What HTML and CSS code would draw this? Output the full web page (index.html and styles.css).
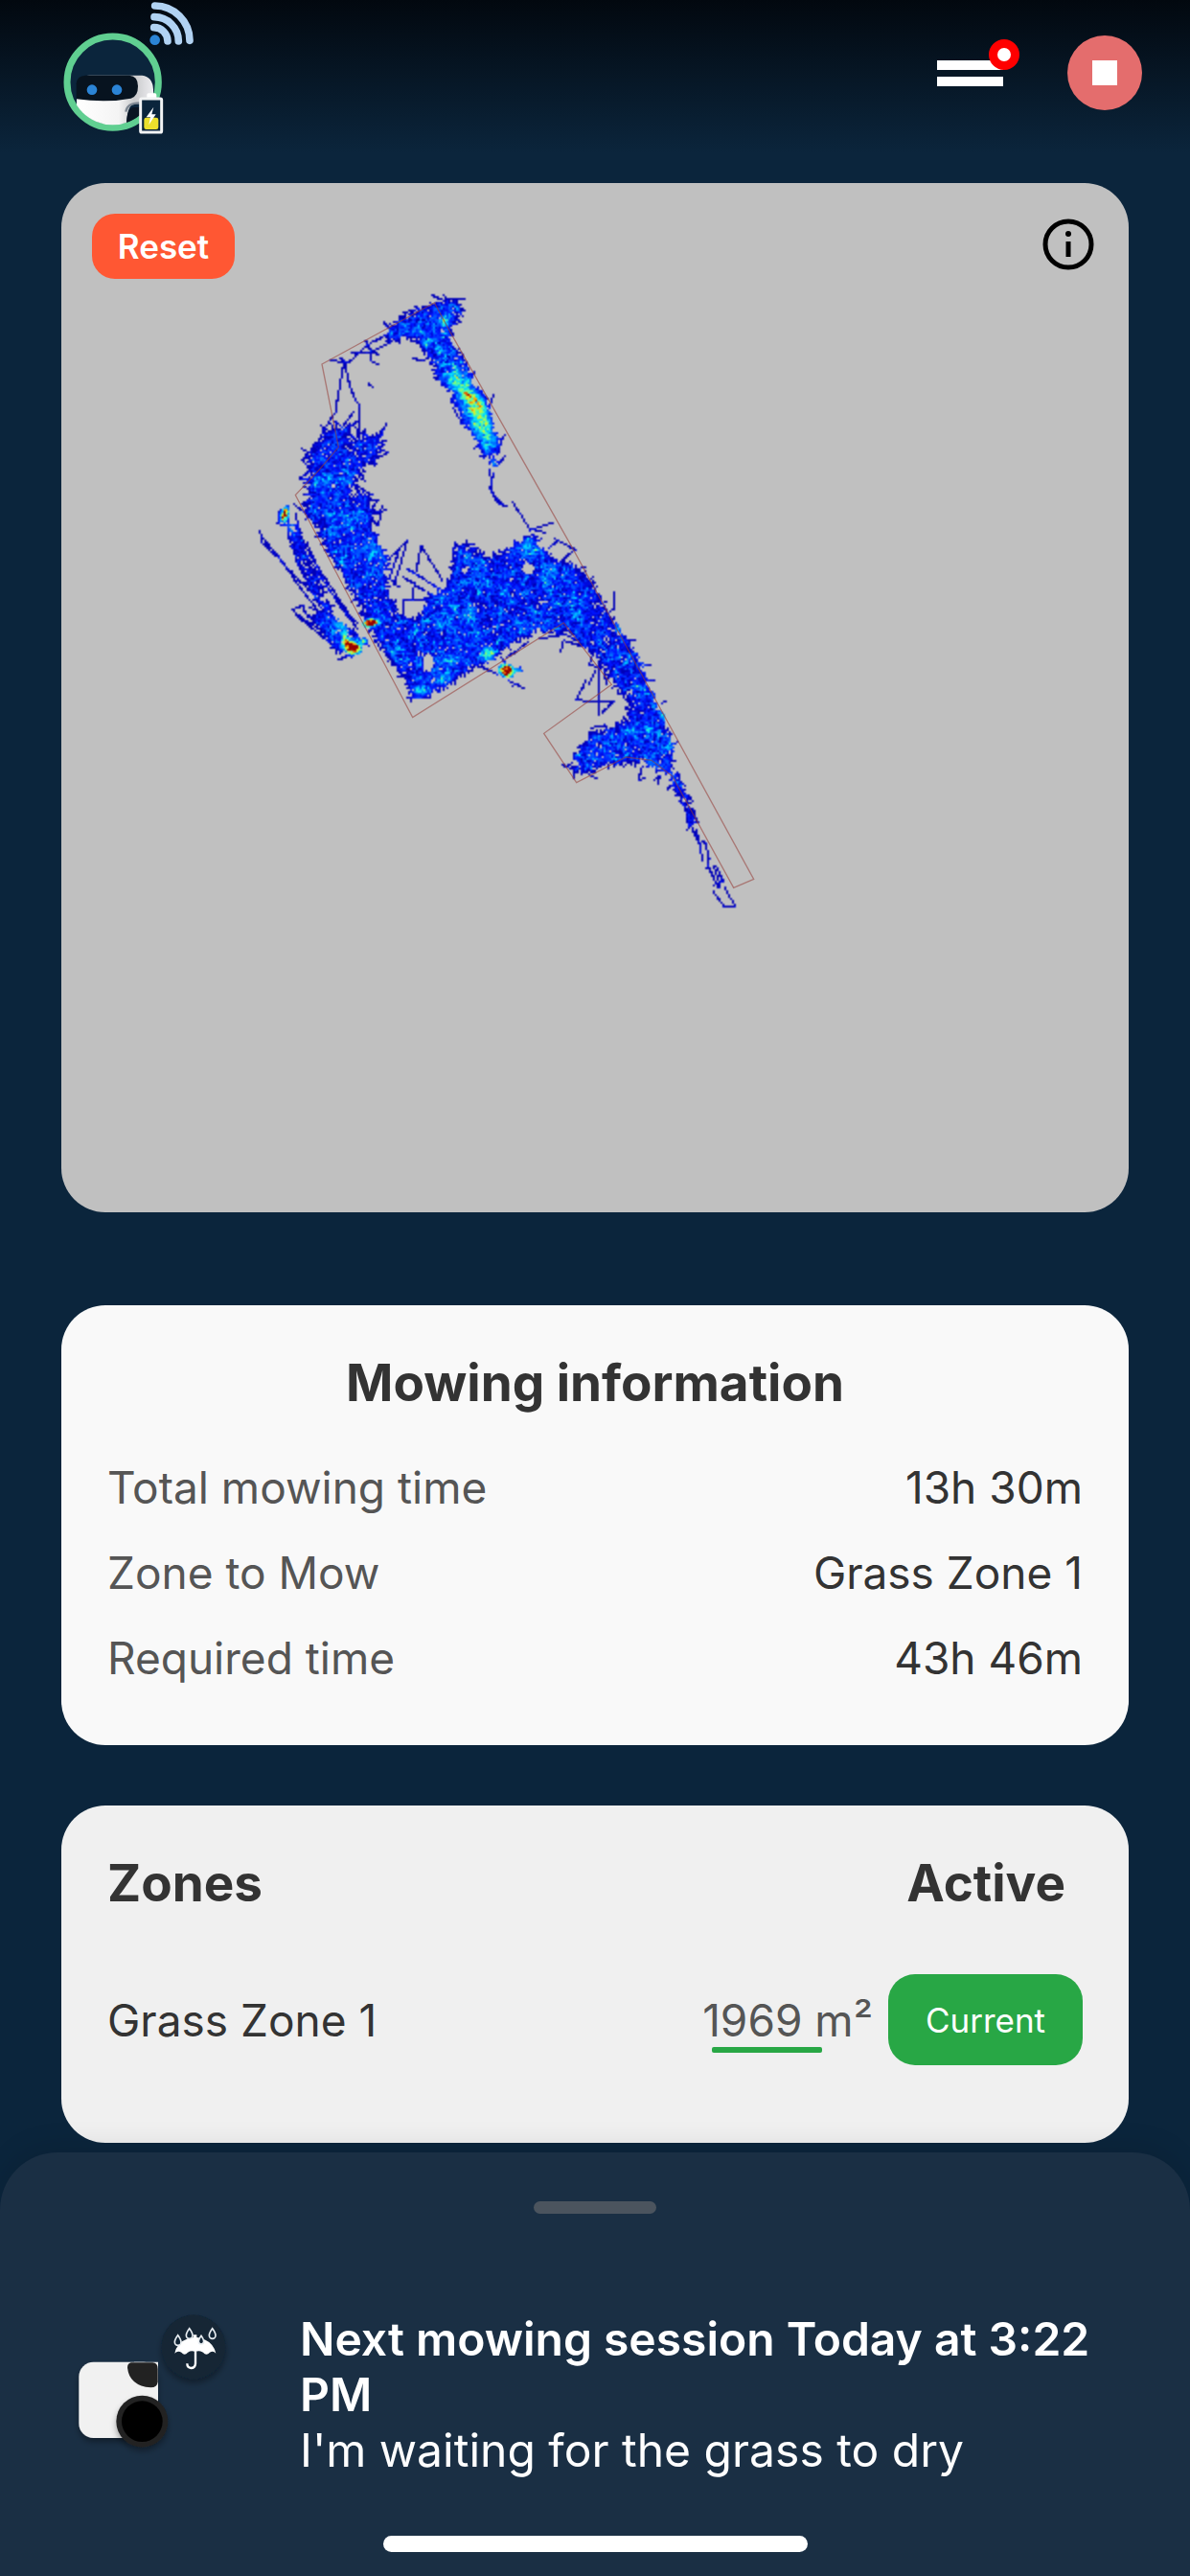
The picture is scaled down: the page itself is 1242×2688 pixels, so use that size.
FILE: index.html
```html
<!DOCTYPE html>
<html lang="en">
<head>
    <meta charset="UTF-8">
    <meta name="viewport" content="width=device-width, initial-scale=1.0">
    <title>Mower</title>
    <link rel="stylesheet" href="styles.css">
</head>
<body>
    <header class="topbar">
        <svg class="robot" viewBox="0 0 600 540" role="img" aria-label="Robot status">
            <defs>
                <clipPath id="face"><circle cx="233" cy="257" r="134"/></clipPath>
                <linearGradient id="shell" x1="0" y1="0" x2="1" y2="0">
                    <stop offset="0" stop-color="#ffffff"/>
                    <stop offset="0.55" stop-color="#f4f4f4"/>
                    <stop offset="0.75" stop-color="#c9cacc"/>
                    <stop offset="1" stop-color="#ededf0"/>
                </linearGradient>
            </defs>
            <circle cx="233" cy="257" r="143" fill="#0b253c" stroke="#60cf91" stroke-width="21"/>
            <g clip-path="url(#face)">
                <path d="M120 300 Q120 236 160 236 H325 Q358 240 360 280 V325 H300 Q277 330 276 395 H120 Z" fill="url(#shell)"/>
                <path d="M276 395 Q276 338 298 336 H350 V395 Z" fill="#091422"/>
                <path d="M274 350 Q278 322 318 322" fill="none" stroke="#7d8792" stroke-width="7"/>
                <path d="M119 310 V262 Q121 237 148 236 H285 Q312 238 312 270 Q312 302 290 308 Q215 323 119 310 Z" fill="#07131f"/>
            </g>
            <circle cx="168" cy="281" r="16" fill="#2b84d6"/>
            <circle cx="246" cy="281" r="16" fill="#2b84d6"/>
            <g fill="none" stroke="#b1d2f2" stroke-width="23" stroke-linecap="round">
                <path d="M362 86 A43 43 0 0 1 405 129"/>
                <path d="M363 53 A76 76 0 0 1 439 129"/>
                <path d="M365 18 A109 109 0 0 1 474 127"/>
            </g>
            <circle cx="365" cy="125" r="16" fill="#2b84d6"/>
            <rect x="340" y="292" width="30" height="20" rx="5" fill="#fff"/>
            <rect x="320" y="309" width="66" height="105" rx="4" fill="#0b253c" stroke="#f2f3f4" stroke-width="9"/>
            <rect x="331" y="368" width="45" height="37" rx="7" fill="#ece02c"/>
            <path d="M361 335 L338 367 H351 L346 391 L368 358 H355 Z" fill="#fff"/>
        </svg>
        <div class="actions">
            <button class="menu" type="button" aria-label="Menu">
                <span class="bar"></span>
                <span class="bar"></span>
                <span class="alert"></span>
            </button>
            <button class="stop" type="button" aria-label="Stop"><span></span></button>
        </div>
    </header>

    <main>
        <section class="card map">
            <canvas id="heatmap" width="1114" height="1074"></canvas>
            <button class="reset" type="button">Reset</button>
            <button class="info" type="button" aria-label="Map information">
                <svg viewBox="0 0 54 54">
                    <circle cx="27" cy="27" r="24" fill="none" stroke="#000" stroke-width="5"/>
                    <circle cx="27" cy="16" r="3" fill="#000"/>
                    <path d="M27 24 V40" stroke="#000" stroke-width="5"/>
                </svg>
            </button>
        </section>

        <section class="card mowing">
            <h2>Mowing information</h2>
            <dl>
                <div><dt>Total mowing time</dt><dd>13h 30m</dd></div>
                <div><dt>Zone to Mow</dt><dd>Grass Zone 1</dd></div>
                <div><dt>Required time</dt><dd>43h 46m</dd></div>
            </dl>
        </section>

        <section class="card zones">
            <table>
                <thead>
                    <tr><th>Zones</th><th class="active">Active</th></tr>
                </thead>
                <tbody>
                    <tr>
                        <td>Grass Zone 1</td>
                        <td>
                            <div class="zone-state">
                                <span class="area">1969 m²</span>
                                <button class="current" type="button">Current</button>
                            </div>
                        </td>
                    </tr>
                </tbody>
            </table>
        </section>
    </main>

    <footer class="sheet">
        <div class="handle"></div>
        <div class="session">
            <svg class="mower" viewBox="0 0 720 660" role="img" aria-label="Waiting for dry weather">
                <defs>
                    <filter id="drop" x="-30%" y="-30%" width="160%" height="160%">
                        <feDropShadow dx="0" dy="12" stdDeviation="9" flood-color="#000" flood-opacity="0.35"/>
                    </filter>
                </defs>
                <rect x="127" y="254" width="248" height="238" rx="46" fill="#f1f1f1" filter="url(#drop)"/>
                <path d="M300 254 H375 V410 H300 Z" fill="#f1f1f1"/>
                <path d="M290 256 H358 Q374 257 374 275 V316 Q373 334 352 334 Q285 328 279 272 Q279 259 290 256 Z" fill="#222"/>
                <circle cx="325" cy="440" r="81" fill="#222" filter="url(#drop)"/>
                <circle cx="325" cy="440" r="64" fill="#000"/>
                <circle cx="486" cy="207" r="101" fill="#122536" filter="url(#drop)"/>
                <path d="M427 227 Q435 184 486 177 V169 H496 V177 Q546 184 556 227 Q548 218 537 224 Q526 236 516 224 Q505 217 491 222 Q479 217 468 224 Q458 236 448 224 Q436 218 427 227 Z" fill="#fff"/>
                <path d="M492 220 V259 Q491 273 478 273 Q466 272 466 259" fill="none" stroke="#fff" stroke-width="7"/>
                <g fill="#122536" stroke="#e8edf1" stroke-width="5">
                    <path d="M437 170 Q427 183 427 192 A10 10 0 0 0 447 192 Q447 183 437 170 Z"/>
                    <path d="M473 149 Q463 162 463 171 A10 10 0 0 0 483 171 Q483 162 473 149 Z"/>
                    <path d="M510 172 Q502 183 502 190 A8 8 0 0 0 518 190 Q518 183 510 172 Z"/>
                    <path d="M545 149 Q535 162 535 171 A10 10 0 0 0 555 171 Q555 162 545 149 Z"/>
                </g>
            </svg>
            <div class="message">
                <strong>Next mowing session Today at 3:22 PM</strong>
                <p>I'm waiting for the grass to dry</p>
            </div>
        </div>
        <div class="home"></div>
    </footer>

    <script src="heatmap.js"></script>
</body>
</html>
```

FILE: styles.css
```css
* { box-sizing: border-box; }
body { margin: 0; min-height: 100vh; background-color: #0B253C; color: #333; font-family: Inter, "Liberation Sans", sans-serif; font-size: 46px; }
button { border: 0; padding: 0; font-family: inherit; cursor: pointer; }
h2, p, dl, dd { margin: 0; }

.topbar { display: flex; justify-content: space-between; align-items: flex-start; height: 191px; padding: 0 50px 0 40px; background: linear-gradient(#02080F, #0B253C 160px); }
.robot { width: 200px; height: 180px; }
.actions { display: flex; align-items: center; gap: 67px; padding-top: 37px; }
.menu { position: relative; display: flex; flex-direction: column; gap: 7px; width: 69px; background: none; }
.bar { height: 10px; background: #FFF; }
.alert { position: absolute; top: -22px; right: -17px; width: 32px; height: 32px; border: 9px solid #FF0000; border-radius: 50%; background: #FFF; }
.stop { display: flex; justify-content: center; align-items: center; width: 78px; height: 78px; border-radius: 50%; background: #E46D6D; }
.stop span { width: 26px; height: 26px; background: #FFF; }

main { padding: 0 64px; }
.card { border-radius: 46px; }
.map { position: relative; overflow: hidden; margin-bottom: 97px; background: #C0C0C0; }
.map canvas { display: block; width: 100%; }
.reset { position: absolute; top: 32px; left: 32px; width: 149px; height: 68px; border-radius: 24px; background: #FF5733; color: #FFF; font-size: 35px; font-weight: 600; }
.info { position: absolute; top: 37px; right: 36px; width: 54px; height: 54px; background: none; }
.info svg { display: block; }

.mowing { margin-bottom: 63px; padding: 48px 48px 46px; background: #F9F9F9; }
h2 { margin-bottom: 32px; font-size: 53px; line-height: 66px; font-weight: 650; text-align: center; }
dl div { display: flex; justify-content: space-between; line-height: 89px; }
dt { color: #555; }

.zones { padding: 36px 48px 81px; background: #F0F0F0; }
table { width: 100%; border-collapse: collapse; }
th, td { padding: 0; text-align: left; }
th { padding-bottom: 50px; font-size: 53px; line-height: 90px; font-weight: 650; }
.active { padding-right: 18px; text-align: right; }
.zone-state { display: flex; justify-content: flex-end; align-items: center; gap: 16px; }
.area { position: relative; color: #555; }
.area::after { content: ""; position: absolute; left: 10px; bottom: -6px; width: 115px; height: 6px; border-radius: 2px; background: #28A745; }
.current { width: 203px; height: 95px; border-radius: 28px; background: #28A745; color: #FFF; font-size: 35px; }

.sheet { position: fixed; left: 0; right: 0; bottom: 0; padding: 51px 0 25px; border-radius: 60px 60px 0 0; background: #1A2F44; color: #FFF; box-shadow: 0 -6px 30px rgba(0, 0, 0, 0.1); }
.handle { width: 128px; height: 13px; margin: 0 auto 70px; border-radius: 7px; background: #4B545E; }
.session { display: flex; align-items: center; padding: 0 96px 0 40px; }
.mower { flex: none; width: 240px; height: 220px; margin-right: 33px; }
.message { padding-top: 18px; font-size: 48px; line-height: 58px; }
.message strong { font-weight: 600; }
.home { width: 443px; height: 17px; margin: 46px auto 0; border-radius: 9px; background: #FFF; }
```

FILE: heatmap.js
```js
// Coverage heat map. Map units are a third of a canvas pixel.
const canvas = document.getElementById("heatmap");
const ctx = canvas.getContext("2d");
const CELL = 2;
const OX = 528, OY = 267;
const cols = canvas.width / CELL;
const rows = canvas.height / CELL;
const grid = new Float32Array(cols * rows);

let seed = 7;
function rnd() {
    seed = (seed * 1664525 + 1013904223) % 4294967296;
    return seed / 4294967296;
}

// mowed regions: outline, number of passes, pass length
const regions = [
    { n: 1650, len: 46, p: [[500,195],[550,150],[640,115],[710,110],[722,130],[690,180],[690,230],[740,300],[780,390],[810,450],[820,510],[840,555],[825,620],[805,590],[760,520],[710,430],[680,360],[652,350],[640,290],[600,240],[565,208],[490,222]] },
    { n: 360, len: 95, p: [[250,610],[290,530],[360,500],[400,540],[430,560],[400,640],[380,690],[250,680]] },
    { n: 50, len: 90, p: [[390,530],[470,530],[470,580],[410,610]] },
    { n: 70, len: 60, p: [[400,700],[430,720],[460,780],[420,810],[380,760]] },
    { n: 8900, len: 48, p: [[240,690],[280,650],[375,650],[375,730],[420,760],[445,830],[485,910],[480,990],[530,1085],[590,1105],[630,1030],[690,990],[718,880],[740,860],[800,912],[880,880],[940,840],[1000,910],[1090,950],[1135,995],[1195,1090],[1275,1230],[1330,1370],[1385,1495],[1375,1580],[1300,1540],[1190,1550],[1090,1575],[1065,1550],[1120,1480],[1150,1455],[1225,1435],[1255,1410],[1250,1360],[1210,1290],[1150,1210],[1060,1135],[960,1130],[890,1170],[840,1200],[780,1235],[660,1310],[575,1350],[540,1270],[470,1170],[410,1070],[360,960],[300,870],[250,770]] },
    { n: 330, len: 50, p: [[175,790],[195,800],[235,890],[290,1000],[320,1090],[390,1140],[420,1170],[380,1205],[320,1180],[300,1110],[250,980],[210,890]] },
    { n: 90, len: 40, p: [[1380,1580],[1405,1590],[1430,1650],[1455,1720],[1455,1750],[1442,1740],[1400,1630]] },
    { n: 60, len: 40, p: [[240,1075],[300,1100],[330,1150],[310,1160]] }
];

// spots that were never covered: x, y, rx, ry
const holes = [
    [935,940,21,20], [566,1068,26,28], [621,1235,19,30], [735,945,10,10],
    [325,682,10,10], [880,975,8,8], [990,1045,9,6], [1255,1325,9,9], [1085,1550,9,8]
];

// single passes
const tracks = [
    [[288,515],[330,450],[358,290],[345,280]], [[360,295],[375,370],[395,415],[405,430],[405,600]],
    [[315,288],[370,296],[430,240],[560,170]], [[380,265],[430,265],[500,235]], [[440,250],[440,290],[462,300]],
    [[425,225],[440,260],[465,270]], [[480,170],[500,190],[540,175]], [[540,138],[590,128]],
    [[632,85],[670,100],[735,95]], [[670,85],[690,120],[735,130]], [[575,280],[600,290],[640,270]],
    [[433,362],[446,370]], [[385,452],[350,500],[290,525],[265,555],[230,600]], [[488,488],[475,520],[410,550]],
    [[410,515],[480,550],[440,585]], [[400,620],[495,578],[480,570],[430,590]], [[225,600],[320,690]],
    [[390,675],[445,710],[380,720]], [[380,725],[465,725]], [[490,755],[440,770],[400,760]], [[475,745],[465,805],[440,780]],
    [[825,395],[812,440]], [[700,440],[712,460]], [[862,520],[835,570]], [[858,590],[835,620]],
    [[815,630],[818,700],[840,735],[865,745]], [[825,640],[815,690],[835,720],[855,740]],
    [[883,730],[910,770],[940,820],[1012,796]], [[940,815],[988,828]], [[1018,848],[1080,880],[1010,940]], [[1030,850],[1000,875]],
    [[500,910],[556,850],[515,990]], [[530,880],[500,970],[528,998]], [[583,950],[598,868],[665,975]],
    [[578,985],[570,1040],[540,1040],[545,1080]], [[540,965],[610,1010]], [[555,940],[650,1000]], [[560,1035],[605,1035]],
    [[695,920],[705,860],[720,880]], [[1110,935],[1060,950]], [[1135,965],[1120,990]], [[1200,1070],[1204,1015]],
    [[95,820],[98,855],[150,905],[215,975],[290,1050],[325,1110]], [[100,840],[150,900],[235,1020],[300,1100]],
    [[155,790],[150,765],[180,742],[185,780],[170,795]], [[145,800],[205,805],[240,900],[360,1080],[400,1110]],
    [[205,770],[225,850],[270,930],[385,1100]], [[180,820],[215,930],[300,1090],[340,1160]], [[215,800],[205,900],[270,1030],[360,1150]],
    [[240,860],[300,990],[400,1130]], [[195,1070],[230,1055],[235,1080],[300,1130]], [[200,1075],[240,1105],[305,1145]],
    [[250,1060],[330,1110]], [[205,1085],[310,1170],[350,1200]], [[340,1226],[400,1200]], [[200,740],[240,770]],
    [[780,1245],[835,1270]], [[865,1220],[935,1170]], [[850,1220],[880,1260],[910,1250]], [[870,1290],[920,1315]], [[885,1305],[905,1300]],
    [[970,1160],[1050,1145],[1140,1190]], [[1035,1200],[1045,1165],[1110,1185]], [[1140,1200],[1125,1240],[1160,1250]],
    [[1152,1230],[1152,1400]], [[1145,1260],[1125,1300]], [[1115,1290],[1085,1352],[1200,1358],[1165,1390]],
    [[1170,1260],[1180,1300]], [[1130,1440],[1170,1430]], [[1040,1555],[1080,1570],[1075,1595]], [[1130,1590],[1150,1595]],
    [[1280,1600],[1290,1560]], [[1280,1600],[1300,1598]], [[1330,1600],[1345,1590],[1340,1615]],
    [[1370,1630],[1400,1610],[1430,1650]], [[1440,1740],[1470,1800],[1480,1855]], [[1460,1760],[1475,1830]],
    [[1480,1795],[1490,1800],[1500,1850],[1493,1880]], [[1495,1865],[1530,1940],[1540,1910]], [[1520,1870],[1545,1920],[1515,1930]],
    [[1515,1873],[1530,1920]], [[1550,1940],[1568,1975]], [[1512,1948],[1545,1995],[1580,1995],[1573,1978]],
    [[1255,1165],[1268,1165]], [[1295,1245],[1315,1243]], [[1310,1290],[1326,1288]], [[1350,1360],[1364,1358]]
];

// warmer areas: x, y, rx, ry, angle, strength
const heat = [
    [745,400,32,85,-0.5,8], [790,495,34,60,-0.45,7], [700,345,28,22,0,4], [668,165,16,28,0,5], [825,612,12,22,0,6],
    [168,768,10,20,0.3,28], [380,1185,24,16,0.4,32], [360,1155,12,22,-0.5,9], [435,1107,20,10,-0.2,32], [415,1163,14,11,0,10],
    [863,1257,20,17,0.4,32], [905,1255,13,8,0,8], [805,1205,20,22,0,9], [340,1110,20,30,-0.4,5],
    [190,810,14,26,-0.4,5], [935,875,60,26,0,3], [650,1010,45,25,0.6,2], [755,1080,14,30,0,4], [690,1225,40,14,0,4],
    [660,1280,30,18,0,4], [600,1320,40,14,0,3], [940,1120,50,14,0,3], [390,860,46,100,-0.5,1], [470,900,25,60,-0.4,2],
    [1216,1125,11,20,-0.5,6], [1290,1240,12,60,-0.45,3], [1352,1398,10,20,-0.5,7], [1330,1350,12,50,-0.5,3],
    [1380,1490,14,30,-0.4,4], [1325,1550,32,14,0.4,4], [1245,1440,14,12,0,4], [1382,1585,15,14,0,4], [570,960,26,10,0.6,4],
    [740,895,45,9,0.5,3], [370,790,14,10,0,3], [1000,950,12,40,0.5,3], [1160,1520,40,14,0,2], [700,1130,10,60,-0.4,2]
];

function inside(x, y, p) {
    let hit = false;
    for (let i = 0, j = p.length - 1; i < p.length; j = i++) {
        if ((p[i][1] > y) !== (p[j][1] > y) && x < (p[j][0] - p[i][0]) * (y - p[i][1]) / (p[j][1] - p[i][1]) + p[i][0]) hit = !hit;
    }
    return hit;
}

function inHole(x, y) {
    return holes.some(h => ((x - h[0]) / h[2]) ** 2 + ((y - h[1]) / h[3]) ** 2 < 0.8 + rnd() * 0.4);
}

function pass(x1, y1, x2, y2, force) {
    const steps = Math.ceil(Math.hypot(x2 - x1, y2 - y1) / 5) || 1;
    let last = -1;
    for (let i = 0; i <= steps; i++) {
        const x = x1 + (x2 - x1) * i / steps;
        const y = y1 + (y2 - y1) * i / steps;
        if (!force && inHole(x, y)) continue;
        const c = Math.floor((y + OY) / 3 / CELL) * cols + Math.floor((x + OX) / 3 / CELL);
        if (c !== last) grid[c] += 1;
        last = c;
    }
}

for (const r of regions) {
    const xs = r.p.map(q => q[0]), ys = r.p.map(q => q[1]);
    const x0 = Math.min(...xs), y0 = Math.min(...ys);
    const w = Math.max(...xs) - x0, h = Math.max(...ys) - y0;
    let left = Math.round(r.n * 0.5);
    while (left > 0) {
        const x = x0 + rnd() * w, y = y0 + rnd() * h;
        if (!inside(x, y, r.p)) continue;
        const a = rnd() * Math.PI, l = r.len * (0.3 + rnd() * 0.7) / 2;
        pass(x - Math.cos(a) * l, y - Math.sin(a) * l, x + Math.cos(a) * l, y + Math.sin(a) * l, false);
        left--;
    }
}

for (const t of tracks) {
    for (let i = 1; i < t.length; i++) pass(t[i - 1][0], t[i - 1][1], t[i][0], t[i][1], true);
}

const scale = [
    [0, 0, 0, 150], [1, 0, 0, 185], [3, 0, 20, 255], [6, 0, 120, 255], [9, 0, 225, 255],
    [12, 110, 255, 140], [15, 240, 240, 20], [18, 255, 120, 0], [22, 150, 0, 0]
];

function colour(v) {
    for (let i = 1; i < scale.length; i++) {
        const a = scale[i - 1], b = scale[i];
        if (v <= b[0]) {
            const t = (v - a[0]) / (b[0] - a[0]);
            return [1, 2, 3].map(k => a[k] + (b[k] - a[k]) * t);
        }
    }
    return scale[scale.length - 1].slice(1);
}

const layer = document.createElement("canvas");
layer.width = cols;
layer.height = rows;
const lctx = layer.getContext("2d");
const img = lctx.createImageData(cols, rows);

for (let r = 0; r < rows; r++) {
    for (let c = 0; c < cols; c++) {
        const k = r * cols + c;
        const x = c * CELL * 3 - OX, y = r * CELL * 3 - OY;
        let v = grid[k];
        let warm = 0;
        for (const s of heat) {
            const dx = x - s[0], dy = y - s[1];
            const u = (dx * Math.cos(s[4]) + dy * Math.sin(s[4])) / s[2];
            const w = (dy * Math.cos(s[4]) - dx * Math.sin(s[4])) / s[3];
            const d = u * u + w * w;
            if (d < 4) warm += s[5] * Math.exp(-d);
        }
        if (!v && warm < 5) continue;
        v += warm * (0.6 + rnd() * 0.7);
        const rgb = colour(v);
        img.data.set([rgb[0], rgb[1], rgb[2], 255], k * 4);
    }
}
lctx.putImageData(img, 0, 0);
ctx.drawImage(layer, 0, 0, canvas.width, canvas.height);

// zone border
const border = [
    [288,300],[640,108],[690,200],[1075,880],[1640,1912],[1577,1939],[1385,1590],[1320,1540],[1240,1530],
    [1085,1610],[983,1456],[1195,1303],[1045,1110],[572,1406],[205,710],[280,630],[340,560]
];
ctx.setTransform(1 / 3, 0, 0, 1 / 3, OX / 3, OY / 3);
ctx.beginPath();
border.forEach(p => ctx.lineTo(p[0], p[1]));
ctx.closePath();
ctx.lineWidth = 4;
ctx.strokeStyle = "rgba(150, 60, 55, 0.55)";
ctx.stroke();
```
